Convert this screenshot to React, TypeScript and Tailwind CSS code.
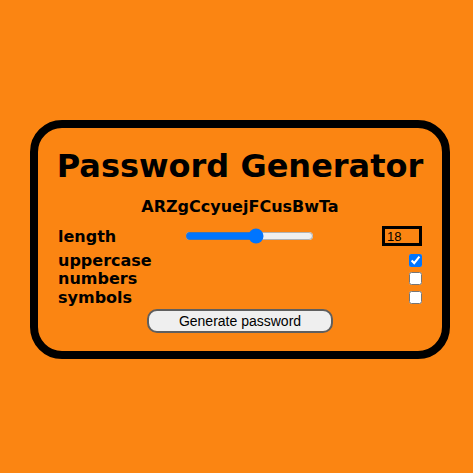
import React, { useState } from 'react';

export default function App() {
  const [length, setLength] = useState(18);
  const [upper, setUpper] = useState(true);
  const [numbers, setNumbers] = useState(false);
  const [symbols, setSymbols] = useState(false);

  const options = [
    { label: 'uppercase', checked: upper, set: setUpper },
    { label: 'numbers', checked: numbers, set: setNumbers },
    { label: 'symbols', checked: symbols, set: setSymbols },
  ];

  return (
    <div className="w-[473px] h-[473px] bg-[#fb8512] pt-[120px] pl-[30px] font-['DejaVu_Sans',Verdana,sans-serif] text-black">
      <div className="w-[420px] h-[239px] border-[8px] border-black rounded-[32px] px-[20px] pt-[20px] flex flex-col">
        <h1 className="text-[32px] font-bold leading-[37px] text-center whitespace-nowrap -mx-[10px]">Password Generator</h1>
        <p className="mt-[12px] text-[16px] font-bold leading-[19px] text-center">ARZgCcyuejFCusBwTa</p>
        <div className="mt-[10px] flex items-center justify-between h-[20px]">
          <label className="text-[16px] font-bold leading-[19px]">length</label>
          <input
            type="range"
            min={0}
            max={32}
            value={length}
            onChange={(e) => setLength(Number(e.target.value))}
            className="w-[129px] accent-[#0075ff]"
          />
          <input
            type="number"
            value={length}
            onChange={(e) => setLength(Number(e.target.value))}
            className="w-[40px] h-[20px] border-[3px] border-black bg-transparent px-[2px] text-[13px] text-black leading-none font-['Liberation_Sans',Arial,sans-serif] [appearance:textfield] [&::-webkit-inner-spin-button]:appearance-none"
          />
        </div>
        <div className="mt-[5px] flex flex-col">
          {options.map((o) => (
            <div key={o.label} className="flex items-center justify-between h-[18.6px]">
              <label className="text-[16px] font-bold leading-[19px]">{o.label}</label>
              <input
                type="checkbox"
                checked={o.checked}
                onChange={(e) => o.set(e.target.checked)}
                className="w-[13px] h-[13px] accent-[#0075ff]"
              />
            </div>
          ))}
        </div>
        <div className="mt-[2px] flex justify-center">
          <button className="w-[186px] h-[24px] border-2 border-[#5f5f5f] rounded-[10px] bg-[#efefef] text-[14px] text-black font-['Liberation_Sans',Arial,sans-serif] leading-none">
            Generate password
          </button>
        </div>
      </div>
    </div>
  );
}
